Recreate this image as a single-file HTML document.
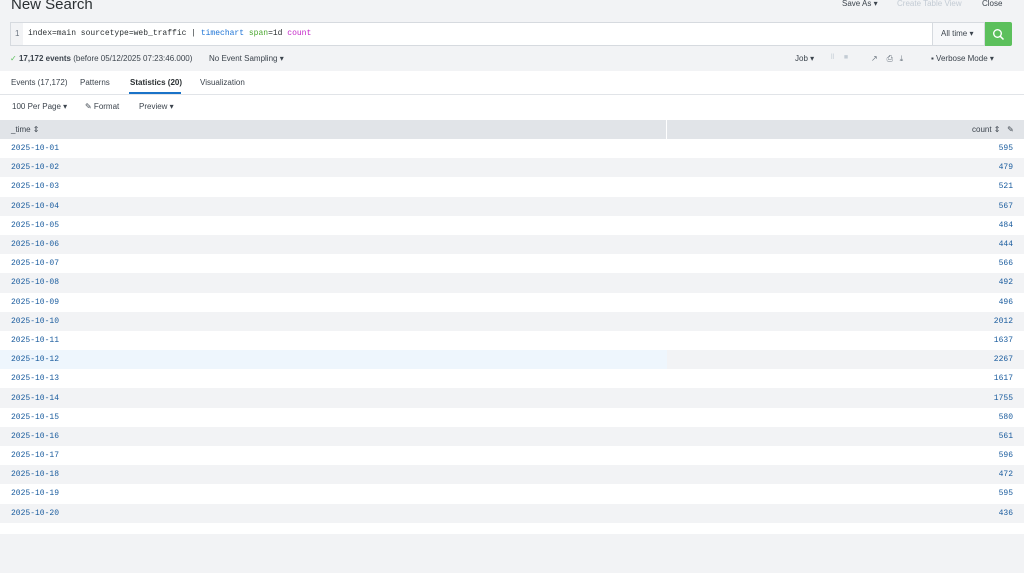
<!DOCTYPE html>
<html><head><style>
*{box-sizing:border-box;margin:0;padding:0}
body{width:1024px;height:573px;background:#f2f3f5;font-family:"Liberation Sans",sans-serif;position:relative;overflow:hidden;color:#3c444d}
.a{position:absolute}
.mono{font-family:"Liberation Mono",monospace}
table{border-collapse:collapse;width:1024px}
td{height:19.2px;font-family:"Liberation Mono",monospace;font-size:8px;color:#1a5c9e;padding:0 11px}
td.r{text-align:right}
tr:nth-child(even) td{background:#f2f3f5}
tr:nth-child(odd) td{background:#fff}
</style></head><body>
<div class="a" style="left:11px;top:-4px;font-size:15px;color:#2b3033">New Search</div>
<div class="a" style="left:842px;top:-1px;font-size:8px;color:#3c444d">Save As ▾</div>
<div class="a" style="left:897px;top:-1px;font-size:8px;color:#c3cbd4">Create Table View</div>
<div class="a" style="left:982px;top:-1px;font-size:8px;color:#3c444d">Close</div>
<div class="a" style="left:10px;top:22px;width:922px;height:24px;background:#fff;border:1px solid #d6dadf;border-right:none"></div>
<div class="a" style="left:11px;top:23px;width:12px;height:22px;background:#f2f3f5"></div>
<div class="a" style="left:15px;top:29px;font-size:8px;color:#6b7580">1</div>
<div class="a mono" style="left:28px;top:29px;font-size:8px;color:#2b3033">index=main sourcetype=web_traffic | <span style="color:#1e74d6">timechart</span> <span style="color:#4aa72e">span</span>=1d <span style="color:#c325c8">count</span></div>
<div class="a" style="left:932px;top:22px;width:53px;height:24px;background:#f7f8fa;border:1px solid #d6dadf"></div>
<div class="a" style="left:941px;top:29px;font-size:8px">All time ▾</div>
<div class="a" style="left:985px;top:22px;width:27px;height:24px;background:#5cc05c;border-radius:0 2px 2px 0"></div>
<svg class="a" style="left:992px;top:28px" width="13" height="13" viewBox="0 0 13 13"><circle cx="5.5" cy="5.5" r="3.8" fill="none" stroke="#fff" stroke-width="1.4"/><path d="M8.3 8.3L11.5 11.5" stroke="#fff" stroke-width="1.5"/></svg>
<div class="a" style="left:10px;top:54px;font-size:8px"><span style="color:#5cc05c">✓</span> <b>17,172 events</b> (before 05/12/2025 07:23:46.000)</div>
<div class="a" style="left:209px;top:54px;font-size:8px">No Event Sampling ▾</div>
<div class="a" style="left:795px;top:54px;font-size:8px">Job ▾</div>
<div class="a" style="left:831px;top:54px;font-size:7px;color:#c3cbd4">ll&nbsp;&nbsp;&nbsp;&nbsp;&nbsp;■</div>
<div class="a" style="left:871px;top:54px;font-size:8px;color:#6b7580">↗&nbsp;&nbsp;&nbsp;&nbsp;⎙&nbsp;&nbsp;&nbsp;⤓</div>
<div class="a" style="left:931px;top:54px;font-size:8px">▪ Verbose Mode ▾</div>
<div class="a" style="left:0;top:71px;width:1024px;height:49px;background:#fff"></div>
<div class="a" style="left:0;top:94px;width:1024px;height:1px;background:#e1e4e8"></div>
<div class="a" style="left:11px;top:78px;font-size:8px">Events (17,172)</div>
<div class="a" style="left:80px;top:78px;font-size:8px">Patterns</div>
<div class="a" style="left:130px;top:78px;font-size:8px;font-weight:bold;color:#2b3033">Statistics (20)</div>
<div class="a" style="left:129px;top:92px;width:52px;height:2px;background:#1a73c8"></div>
<div class="a" style="left:200px;top:78px;font-size:8px">Visualization</div>
<div class="a" style="left:12px;top:102px;font-size:8px">100 Per Page ▾</div>
<div class="a" style="left:85px;top:102px;font-size:8px">✎ Format</div>
<div class="a" style="left:139px;top:102px;font-size:8px">Preview ▾</div>
<div class="a" style="left:0;top:120px;width:1024px;height:19px;background:#e1e4e8"></div>
<div class="a" style="left:666px;top:120px;width:1px;height:19px;background:#fff"></div>
<div class="a" style="left:11px;top:125px;font-size:8px">_time ⇕</div>
<div class="a" style="left:972px;top:125px;font-size:8px">count ⇕&nbsp;&nbsp; ✎</div>
<table class="a" style="left:0;top:139px">
<tr><td>2025-10-01</td><td class="r">595</td></tr>
<tr><td>2025-10-02</td><td class="r">479</td></tr>
<tr><td>2025-10-03</td><td class="r">521</td></tr>
<tr><td>2025-10-04</td><td class="r">567</td></tr>
<tr><td>2025-10-05</td><td class="r">484</td></tr>
<tr><td>2025-10-06</td><td class="r">444</td></tr>
<tr><td>2025-10-07</td><td class="r">566</td></tr>
<tr><td>2025-10-08</td><td class="r">492</td></tr>
<tr><td>2025-10-09</td><td class="r">496</td></tr>
<tr><td>2025-10-10</td><td class="r">2012</td></tr>
<tr><td>2025-10-11</td><td class="r">1637</td></tr>
<tr><td style="background:#eef6fd;width:667px">2025-10-12</td><td class="r">2267</td></tr>
<tr><td>2025-10-13</td><td class="r">1617</td></tr>
<tr><td>2025-10-14</td><td class="r">1755</td></tr>
<tr><td>2025-10-15</td><td class="r">580</td></tr>
<tr><td>2025-10-16</td><td class="r">561</td></tr>
<tr><td>2025-10-17</td><td class="r">596</td></tr>
<tr><td>2025-10-18</td><td class="r">472</td></tr>
<tr><td>2025-10-19</td><td class="r">595</td></tr>
<tr><td>2025-10-20</td><td class="r">436</td></tr>
</table>
<div class="a" style="left:0;top:523px;width:1024px;height:11px;background:#fff"></div>
</body></html>
